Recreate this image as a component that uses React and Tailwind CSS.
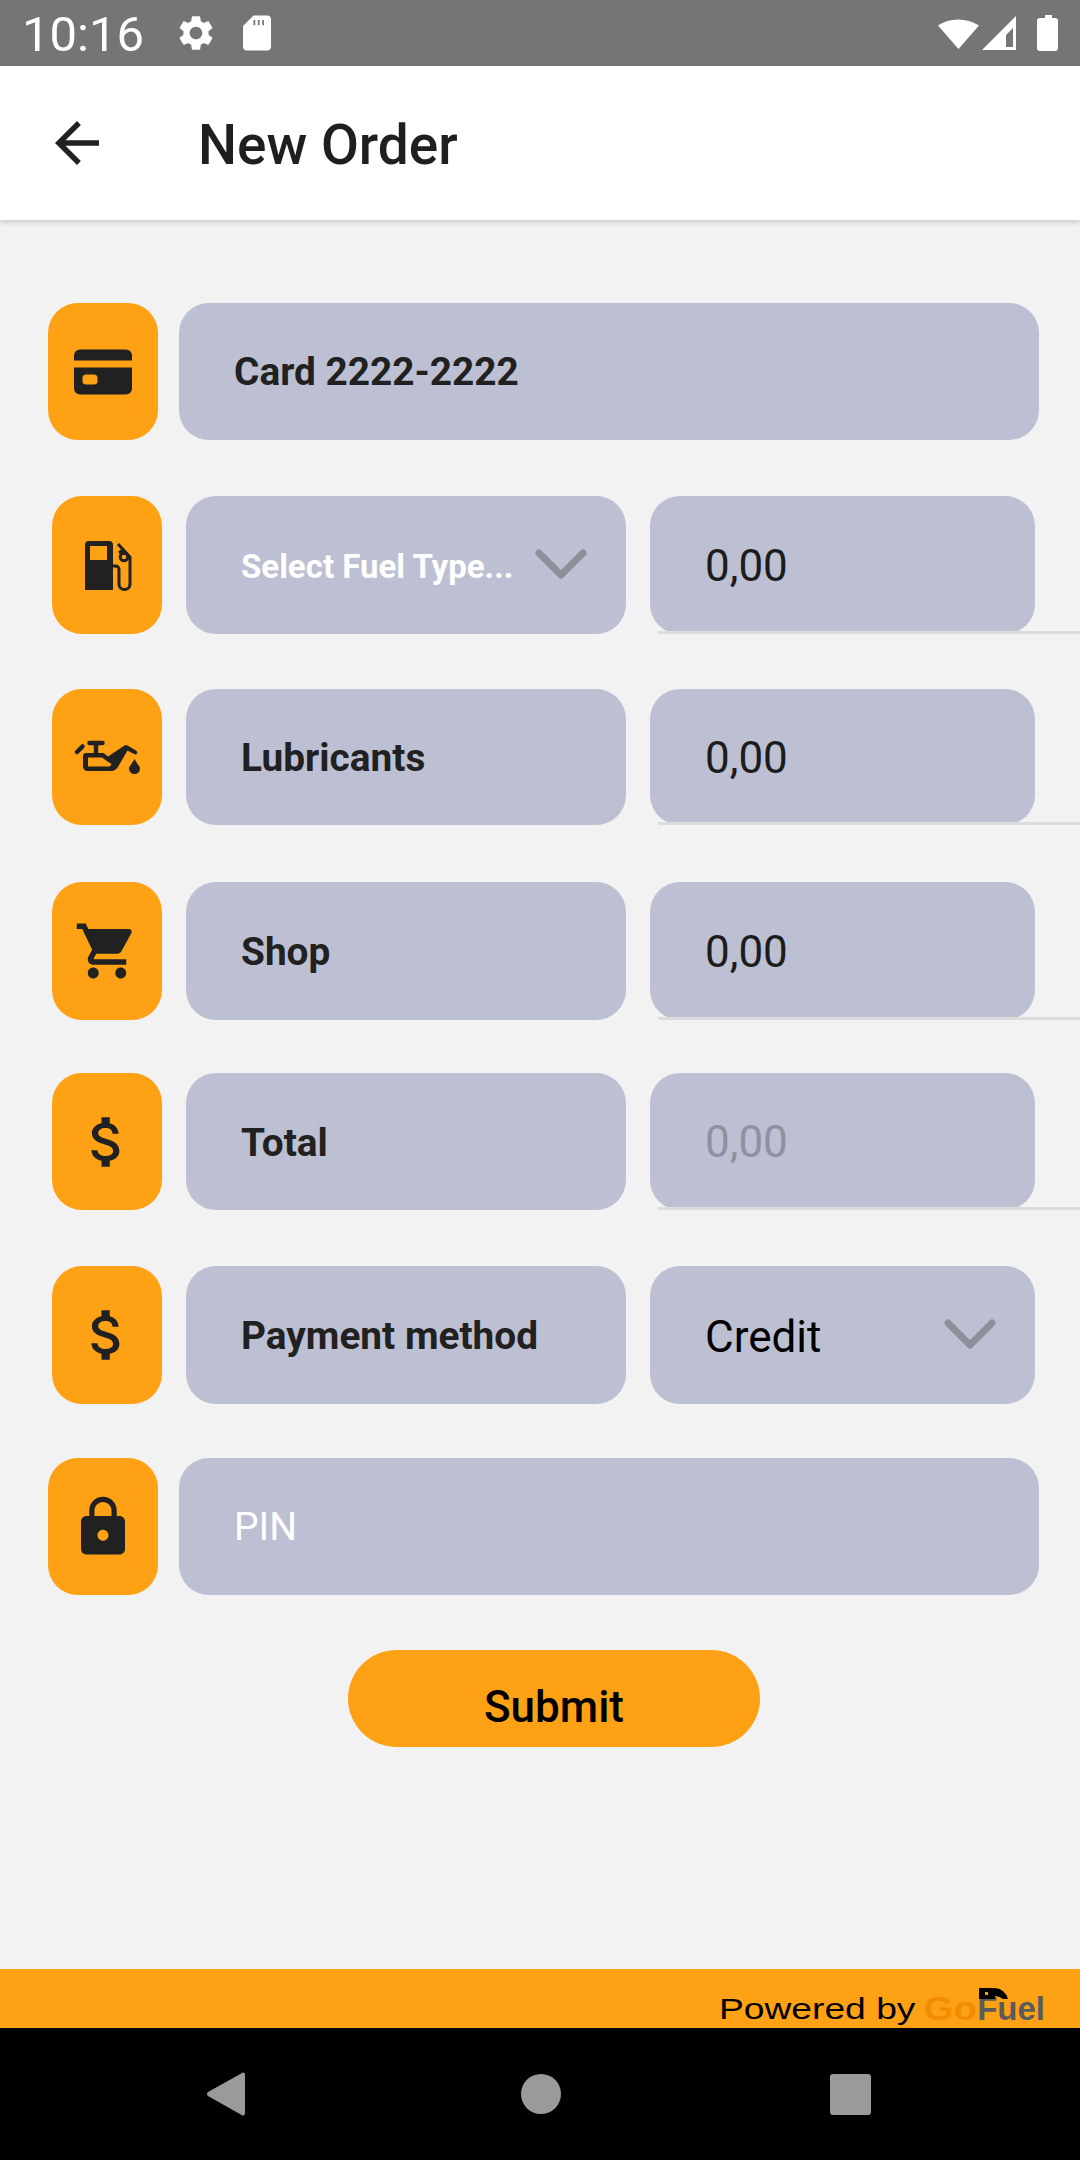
const F = "font-['Roboto',sans-serif]";
const D = "#212121";

const Card = () => (
  <svg viewBox="0 0 66 66" className="w-[66px] h-[66px] overflow-visible" fill={D}>
    <path d="M10 10.500h46a6 6 0 0 1 6 6v5H4v-5a6 6 0 0 1 6-6z" />
    <path fillRule="evenodd" d="M4 28.500h58v21a6 6 0 0 1-6 6H10a6 6 0 0 1-6-6zM16 35.500a3.500 3.500 0 0 0-3.500 3.500v3a3.500 3.500 0 0 0 3.500 3.500h8a3.500 3.500 0 0 0 3.500-3.500v-3a3.500 3.500 0 0 0-3.500-3.500z" />
  </svg>
);
const Fuel = () => (
  <svg viewBox="0 0 66 66" className="w-[66px] h-[66px] overflow-visible" fill="none">
    <path fillRule="evenodd" fill={D} d="M15 9h20a4 4 0 0 1 4 4v45H11V13a4 4 0 0 1 4-4zM16 14v14h17V14z" />
    <path stroke={D} strokeWidth="3" d="M39 34h2.500a3.500 3.500 0 0 1 3.500 3.500V52a5.500 5.500 0 0 0 11 0V25l-12-13" />
    <circle cx="50" cy="25" r="3.800" stroke={D} strokeWidth="3" />
    <path stroke={D} strokeWidth="3" d="M45 21l5-4" />
  </svg>
);
const Oil = () => (
  <svg viewBox="0 0 66 66" className="w-[66px] h-[66px] overflow-visible" fill="none">
    <path stroke={D} strokeWidth="4.500" strokeLinecap="round" d="M3 28L8.500 22.500M15.500 19H28.500M22 19V30" />
    <path fill={D} fillRule="evenodd" d="M12 29H29.500L34 32.500L50.500 21.500Q52 20.500 53.500 21.500L62 26.500Q64 28 63 29.500Q62 31 60 30L53.500 26.500L44.500 42Q42 47 37 47H14Q9 47 9 42V32Q9 29 12 29zM14 33.500V42.500H36L37.500 40L33.500 37.500L28 33.500z" />
    <path fill={D} d="M60.500 35C58 40 55 42 55 44.500a5.500 5.500 0 0 0 11 0C66 42 63 40 60.500 35z" />
  </svg>
);
const Cart = () => (
  <svg viewBox="0 0 24 24" className="w-[66px] h-[66px]" fill={D}>
    <path d="M7 18c-1.100 0-1.990.9-1.990 2S5.900 22 7 22s2-.9 2-2-.9-2-2-2zM1 2v2h2l3.600 7.590-1.350 2.450c-.16.28-.25.61-.25.96 0 1.100.9 2 2 2h12v-2H7.420c-.14 0-.25-.11-.25-.25l.03-.12.9-1.630h7.450c.75 0 1.410-.41 1.750-1.030l3.580-6.480c.08-.14.12-.31.12-.48 0-.55-.45-1-1-1H5.210l-.94-2H1zm16 16c-1.100 0-1.990.9-1.990 2s.89 2 1.990 2 2-.9 2-2-.9-2-2-2z" />
  </svg>
);
const Dollar = () => (
  <svg viewBox="0 0 24 24" className="w-[66px] h-[66px]" fill={D}>
    <path d="M11.800 10.900c-2.270-.59-3-1.200-3-2.150 0-1.090 1.010-1.850 2.700-1.850 1.780 0 2.440.85 2.500 2.100h2.210c-.07-1.720-1.120-3.300-3.210-3.810V3h-3v2.160c-1.940.42-3.500 1.680-3.500 3.610 0 2.310 1.910 3.460 4.700 4.130 2.500.6 3 1.480 3 2.410 0 .69-.49 1.790-2.700 1.790-2.060 0-2.870-.92-2.980-2.100h-2.200c.12 2.190 1.760 3.420 3.680 3.830V21h3v-2.150c1.950-.37 3.500-1.500 3.500-3.550 0-2.840-2.430-3.810-4.700-4.400z" />
  </svg>
);
const Lock = () => (
  <svg viewBox="0 0 24 24" className="w-[66px] h-[66px]" fill={D}>
    <path d="M18 8h-1V6c0-2.760-2.240-5-5-5S7 3.240 7 6v2H6c-1.100 0-2 .9-2 2v10c0 1.100.9 2 2 2h12c1.100 0 2-.9 2-2V10c0-1.100-.9-2-2-2zm-6 9c-1.100 0-2-.9-2-2s.9-2 2-2 2 .9 2 2-.9 2-2 2zm3.100-9H8.900V6c0-1.710 1.390-3.100 3.100-3.100 1.710 0 3.100 1.390 3.100 3.100v2z" />
  </svg>
);
const Chevron = () => (
  <svg viewBox="0 0 52 30" className="w-[52px] h-[30px] mb-[3px]" fill="none" stroke="#8d8f9b" strokeWidth="7" strokeLinecap="round" strokeLinejoin="round">
    <path d="M4 4L26 26L48 4" />
  </svg>
);
const IconBox = ({ children }) => (
  <div className="w-[110px] h-full shrink-0 rounded-[30px] bg-[#ffa114] flex items-center justify-center">{children}</div>
);
const Value = ({ children, muted }) => (
  <div className={`relative w-[385px] h-full rounded-[30px] bg-[#bdc0d2] flex items-center pl-[55px] text-[44px] ${muted ? "text-[#8e919f]" : "text-[#1c1c1c]"}`}>
    <span className="pt-[1px]">{children}</span>
    <div className="absolute left-[8px] -right-[45px] bottom-0 h-[3px] bg-[#dcdcdc]" />
  </div>
);
const Label = ({ children, white, small, chevron }) => (
  <div className={`w-[440px] h-full rounded-[30px] bg-[#bdc0d2] flex items-center justify-between pl-[55px] pr-[39px] font-bold ${small ? "text-[33px]" : "text-[38.800px]"} ${white ? "text-white" : "text-[#212121]"}`}>
    <span className="pt-[3px]">{children}</span>
    {chevron && <Chevron />}
  </div>
);
const Split = ({ icon, h, mt, children }) => (
  <div className={`flex gap-[24px] pl-[52px] ${h} ${mt}`}>
    <IconBox>{icon}</IconBox>
    {children}
  </div>
);

export default function App() {
  return (
    <div className={`${F} w-[1080px] h-[2160px] flex flex-col bg-[#f2f2f2] overflow-hidden`}>
      <div className="h-[66px] shrink-0 bg-[#757575] flex items-center text-white relative">
        <span className="ml-[22px] pt-[3px] text-[49px] leading-none font-normal w-[153px]">10:16</span>
        <svg viewBox="0 0 24 24" className="w-[42px] h-[42px]" fill="#fff">
          <path d="M19.140 12.940c.04-.3.06-.61.06-.94 0-.32-.02-.64-.07-.94l2.030-1.580c.18-.14.23-.41.12-.61l-1.920-3.320c-.12-.22-.37-.29-.59-.22l-2.390.96c-.5-.38-1.030-.7-1.620-.94l-.36-2.540c-.04-.24-.24-.41-.48-.41h-3.840c-.24 0-.43.17-.47.41l-.36 2.540c-.59.24-1.130.57-1.620.94l-2.390-.96c-.22-.08-.47 0-.59.22L2.740 8.870c-.12.21-.08.47.12.61l2.030 1.580c-.05.3-.09.63-.09.94s.02.64.07.94l-2.030 1.580c-.18.14-.23.41-.12.61l1.920 3.320c.12.22.37.29.59.22l2.390-.96c.5.38 1.030.7 1.620.94l.36 2.540c.05.24.24.41.48.41h3.840c.24 0 .44-.17.47-.41l.36-2.540c.59-.24 1.130-.56 1.620-.94l2.390.96c.22.08.47 0 .59-.22l1.920-3.320c.12-.22.07-.47-.12-.61l-2.010-1.580zM12 15.600c-1.980 0-3.600-1.620-3.600-3.600s1.620-3.600 3.600-3.600 3.600 1.620 3.600 3.600-1.620 3.600-3.600 3.600z" />
        </svg>
        <svg viewBox="0 0 24 24" className="ml-[19px] w-[42px] h-[42px]" fill="#fff">
          <path fillRule="evenodd" d="M18 2h-8L4.020 8 4 20c0 1.100.9 2 2 2h12c1.100 0 2-.9 2-2V4c0-1.100-.9-2-2-2zM11 4.500H10v3h1zm2.500 0h-1v3h1zm2.500 0h-1v3h1z" />
        </svg>
        <svg viewBox="0 0 120 36" className="ml-auto mr-[22px] w-[120px] h-[36px]" fill="#fff">
          <path d="M0 10.500C11 2.500 29 2.500 41 10.500L20.500 34z" />
          <path fillRule="evenodd" d="M44 35L78 1V35zM68 32H75V13L68 20z" />
          <path d="M99 6a3 3 0 0 1 3-3h5V0h7v3h3a3 3 0 0 1 3 3v27a3 3 0 0 1-3 3h-15a3 3 0 0 1-3-3z" />
        </svg>
      </div>

      <div className="relative z-10 h-[154px] shrink-0 bg-white shadow-[0_2px_6px_rgba(0,0,0,0.18)] flex items-center pl-[44px]">
        <svg viewBox="0 0 24 24" className="w-[66px] h-[66px]" fill={D}>
          <path d="M20 11H7.830l5.590-5.590L12 4l-8 8 8 8 1.410-1.410L7.830 13H20v-2z" />
        </svg>
        <span className="ml-[88px] pt-[4px] text-[55px] font-medium text-[#1f1f1f]">New Order</span>
      </div>

      <div className="flex-1 flex flex-col">
        <div className="flex gap-[21px] pl-[48px] h-[137px] mt-[83px]">
          <IconBox><Card /></IconBox>
          <div className="w-[860px] h-full rounded-[30px] bg-[#bdc0d2] flex items-center pl-[55px] font-bold text-[38.800px] text-[#212121]">
            <span className="pt-[2px]">Card 2222-2222</span>
          </div>
        </div>
        <Split icon={<Fuel />} h="h-[138px]" mt="mt-[56px]">
          <Label white small chevron>Select Fuel Type...</Label>
          <Value>0,00</Value>
        </Split>
        <Split icon={<Oil />} h="h-[136px]" mt="mt-[55px]">
          <Label>Lubricants</Label>
          <Value>0,00</Value>
        </Split>
        <Split icon={<Cart />} h="h-[138px]" mt="mt-[57px]">
          <Label>Shop</Label>
          <Value>0,00</Value>
        </Split>
        <Split icon={<Dollar />} h="h-[137px]" mt="mt-[53px]">
          <Label>Total</Label>
          <Value muted>0,00</Value>
        </Split>
        <Split icon={<Dollar />} h="h-[138px]" mt="mt-[56px]">
          <Label>Payment method</Label>
          <div className="w-[385px] h-full rounded-[30px] bg-[#bdc0d2] flex items-center justify-between pl-[55px] pr-[39px] text-[44px] text-black">
            <span className="pt-[4px]">Credit</span>
            <Chevron />
          </div>
        </Split>
        <div className="flex gap-[21px] pl-[48px] h-[137px] mt-[54px]">
          <IconBox><Lock /></IconBox>
          <div className="w-[860px] h-full rounded-[30px] bg-[#bdc0d2] flex items-center pl-[55px] text-[39px] text-white">
            <span className="pt-[2px]">PIN</span>
          </div>
        </div>
        <div className="ml-[348px] mt-[55px] w-[412px] h-[97px] rounded-full bg-[#ffa114] flex items-center justify-center text-[44px] font-medium text-black">
          <span className="pt-[16px]">Submit</span>
        </div>
      </div>

      <div className="h-[59px] shrink-0 bg-[#ffa114] flex items-end justify-end pr-[35px] overflow-hidden">
        <span className="inline-block origin-bottom-right scale-x-[1.24] font-['Liberation_Sans',sans-serif] text-[30px] leading-[38px] text-black">Powered by</span>
        <span className="relative ml-[16px] font-['Liberation_Sans',sans-serif] font-bold text-[33px] leading-[38px]">
          <span className="inline-block origin-bottom-right scale-x-[1.16] text-[#f28c00]">Go</span>
          <span className="text-[#5b5b5b]">Fuel</span>
          <svg viewBox="0 0 30 16" className="absolute left-[46px] top-[-2px] w-[34px] h-[16px]" fill="#000">
            <path fillRule="evenodd" d="M0 0H16Q26 1 29 11H24Q20 8 16 8V11H0zM6 4v3h3V4z" />
          </svg>
        </span>
      </div>

      <div className="h-[132px] shrink-0 bg-black flex items-center pl-[207px]">
        <svg viewBox="0 0 38 44" className="w-[38px] h-[44px]" fill="#9a9a9a">
          <path d="M36 .5Q38 0 38 3V41Q38 44 35.500 43.500L1 24Q-1 22 1 20z" />
        </svg>
        <div className="ml-[276px] w-[40px] h-[40px] rounded-full bg-[#9a9a9a]" />
        <div className="ml-[269px] w-[41px] h-[41px] rounded-[3px] bg-[#9a9a9a]" />
      </div>
    </div>
  );
}
